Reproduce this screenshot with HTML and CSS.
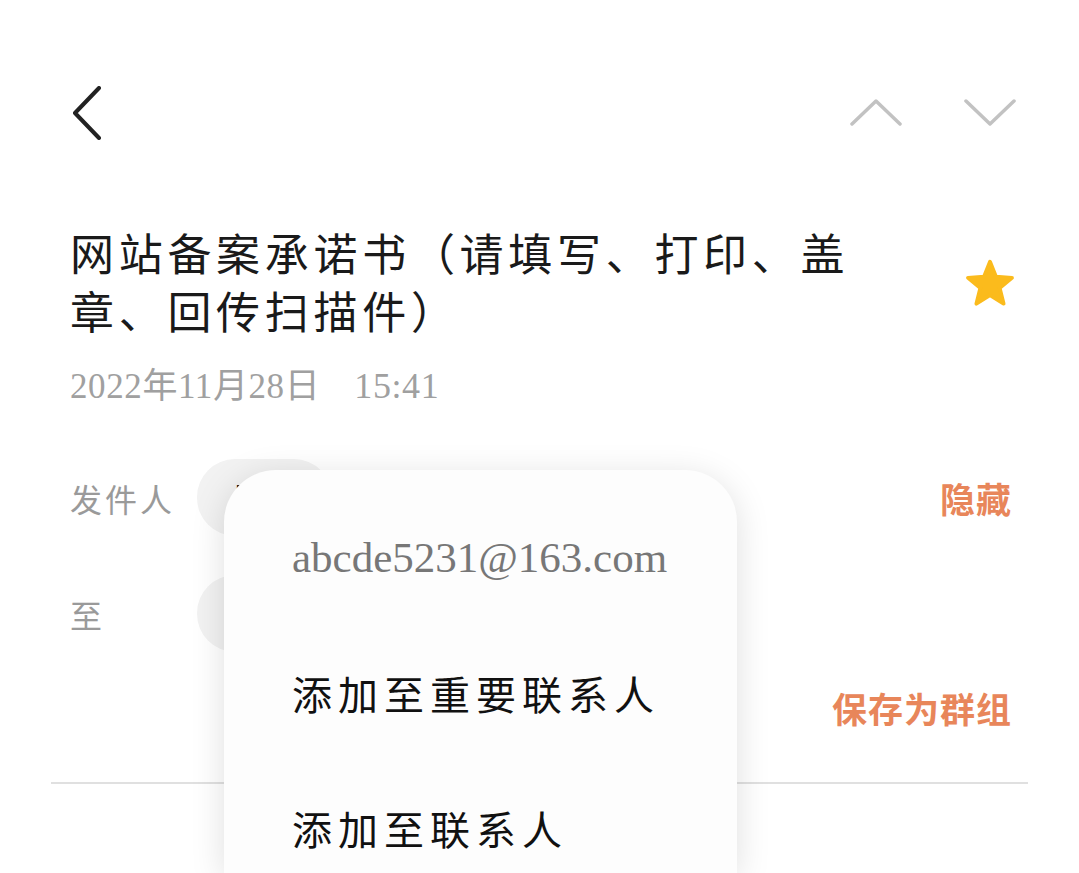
FILE: index.html
```html
<!DOCTYPE html>
<html lang="zh-CN">
<head>
    <meta charset="UTF-8">
    <meta name="viewport" content="width=device-width, initial-scale=1.0">
    <title>邮件详情</title>
    <link rel="stylesheet" href="styles.css">
</head>
<body>
    <div class="page">
        <header class="topbar">
            <svg class="back" width="32" height="54" viewBox="0 0 32 54">
                <polyline points="27,2 3,27 27,52" fill="none" stroke="#222" stroke-width="4" stroke-linecap="round" stroke-linejoin="round"/>
            </svg>
            <div class="nav-arrows">
                <svg width="52" height="28" viewBox="0 0 52 28">
                    <polyline points="2,25 26,2 50,25" fill="none" stroke="#c2c2c2" stroke-width="3.5" stroke-linecap="round" stroke-linejoin="round"/>
                </svg>
                <svg width="52" height="28" viewBox="0 0 52 28">
                    <polyline points="2,2 26,25 50,2" fill="none" stroke="#c2c2c2" stroke-width="3.5" stroke-linecap="round" stroke-linejoin="round"/>
                </svg>
            </div>
        </header>

        <section class="subject">
            <div class="subject-main">
                <h1 class="title">网站备案承诺书（请填写、打印、盖章、回传扫描件）</h1>
                <div class="date">2022年11月28日<span class="time">15:41</span></div>
            </div>
            <svg class="star" width="54" height="54" viewBox="0 0 56 56">
                <polygon points="28,5 34.2,20.5 50.8,21.6 38,32.2 42.1,48.4 28,39.5 13.9,48.4 18,32.2 5.2,21.6 21.8,20.5" fill="#fbbb1c" stroke="#fbbb1c" stroke-width="4" stroke-linejoin="round"/>
            </svg>
        </section>

        <section class="people">
            <div class="person-row">
                <span class="label">发件人</span>
                <span class="chip">网站备案</span>
                <span class="action">隐藏</span>
            </div>
            <div class="person-row second">
                <span class="label">至</span>
                <span class="chip">我</span>
            </div>
            <div class="group-row">
                <span class="action">保存为群组</span>
            </div>
        </section>

        <div class="divider"></div>

        <div class="popup">
            <div class="popup-item email">abcde5231@163.com</div>
            <div class="popup-item">添加至重要联系人</div>
            <div class="popup-item">添加至联系人</div>
        </div>
    </div>
</body>
</html>
```

FILE: styles.css
```css
html, body {
    margin: 0;
    background: #fff;
    height: 100%;
    overflow: hidden;
}
body {
    font-family: "Liberation Serif", "Noto Sans CJK SC", serif;
    color: #1a1a1a;
}
.page {
    position: relative;
    padding: 86px 51px 0 51px;
    height: 873px;
    box-sizing: border-box;
    overflow: hidden;
}
.topbar {
    display: flex;
    align-items: center;
    justify-content: space-between;
    height: 54px;
    padding: 0 12px 0 21px;
}
.nav-arrows {
    display: flex;
    gap: 62px;
}
.nav-arrows svg,
.back {
    display: block;
}

/* тема письма */
.subject {
    display: flex;
    align-items: flex-start;
    justify-content: space-between;
    margin-top: 88px;
    padding: 0 11px 0 19px;
}
.title {
    margin: 0;
    max-width: 815px;
    font-size: 44px;
    line-height: 58px;
    font-weight: 400;
    letter-spacing: 4.7px;
    color: #1a1a1a;
}
.date {
    margin-top: 21px;
    font-size: 35px;
    line-height: 42px;
    letter-spacing: 0.6px;
    color: #a0a0a0;
}
.time {
    margin-left: 34px;
    font-size: 36px;
}
.star {
    margin-top: 29px;
    flex-shrink: 0;
}

.people {
    margin-top: 51px;
    padding: 0 16px 0 19px;
}
.person-row {
    display: flex;
    align-items: center;
    height: 77px;
}
.person-row.second {
    margin-top: 39px;
}
.label {
    width: 127px;
    font-size: 32px;
    letter-spacing: 3px;
    color: #9a9a9a;
}
/* чип под меню, виден только край */
.chip {
    display: flex;
    align-items: center;
    height: 77px;
    width: 135px;
    padding-left: 37px;
    box-sizing: border-box;
    border-radius: 38px;
    background: #f2f2f2;
    font-size: 34px;
    color: #111;
    overflow: hidden;
    white-space: nowrap;
}
.action {
    margin-left: auto;
    font-size: 35px;
    font-weight: 700;
    letter-spacing: 1px;
    color: #e8865a;
}
.group-row {
    display: flex;
    margin-top: 40px;
    height: 40px;
    line-height: 40px;
}
.divider {
    margin-top: 50px;
    height: 2px;
    background: #e0e0e0;
}

/* всплывающее меню */
.popup {
    position: absolute;
    left: 224px;
    top: 470px;
    width: 513px;
    height: 403px;
    box-sizing: border-box;
    padding: 19px 0 0 68px;
    background: #fdfdfd;
    border-radius: 52px 52px 0 0;
    box-shadow: 0 6px 34px rgba(0, 0, 0, 0.13);
}
.popup-item {
    height: 136px;
    display: flex;
    align-items: center;
    font-size: 40px;
    letter-spacing: 6px;
    color: #111;
}
.popup-item:last-child {
    height: 112px;
    align-items: flex-start;
    padding-top: 38px;
    box-sizing: border-box;
}
.popup-item.email {
    font-size: 43px;
    letter-spacing: 0;
    color: #777;
}
```
